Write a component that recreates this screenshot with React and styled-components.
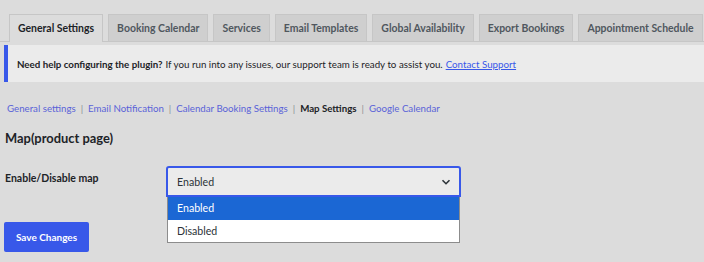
import styled, { createGlobalStyle } from 'styled-components';

const GlobalStyle = createGlobalStyle`
  body {
    margin: 0;
    background: #dcdcdc;
    font-family: Lato, "Open Sans", sans-serif;
    color: #1d2327;
  }
`;

const Page = styled.div`
  width: 704px;
  height: 262px;
  overflow: hidden;
  padding-top: 14px;
  box-sizing: border-box;
`;

const TabBar = styled.div`
  display: flex;
  gap: 5px;
  padding-left: 9px;
  border-bottom: 1px solid #c6c6c6;
`;

const Tab = styled.div`
  padding: 5px 8px;
  font-size: 10.45px;
  line-height: 16px;
  font-weight: 700;
  border: 1px solid #c6c6c6;
  border-bottom: none;
  margin-bottom: ${(p) => (p.active ? '-1px' : '0')};
  background: ${(p) => (p.active ? '#dcdcdc' : '#cfcfcf')};
  color: ${(p) => (p.active ? '#1d2327' : '#50575e')};
  white-space: nowrap;
`;

const Notice = styled.div`
  margin: 3px 0 0 4px;
  height: 37px;
  display: flex;
  align-items: center;
  background: #ebebeb;
  border-left: 4px solid #3858e9;
  padding-left: 9px;
  font-size: 9.75px;
  color: #1d2327;
`;

const Strong = styled.strong`
  font-weight: 700;
  margin-right: 3px;
`;

const Link = styled.a`
  color: #3858e9;
  text-decoration: underline;
  margin-left: 3px;
`;

const SubNav = styled.div`
  display: flex;
  align-items: center;
  padding: 18px 0 0 7px;
  font-size: 9.7px;
  line-height: 16px;
`;

const SubLink = styled.span`
  color: ${(p) => (p.current ? '#1d2327' : '#5a63d8')};
  font-weight: ${(p) => (p.current ? 700 : 400)};
`;

const Sep = styled.span`
  color: #8c8f94;
  padding: 0 5px;
`;

const Heading = styled.h2`
  margin: 12px 0 0 5px;
  font-size: 12.9px;
  line-height: 20px;
  font-weight: 700;
  color: #1d2327;
`;

const FieldRow = styled.div`
  display: flex;
  align-items: flex-start;
  margin-top: 18px;
  padding-left: 5px;
`;

const Label = styled.div`
  width: 161px;
  font-size: 10.5px;
  font-weight: 700;
  line-height: 16px;
  padding-top: 4px;
`;

const SelectWrap = styled.div`
  position: relative;
  width: 295px;
`;

const SelectBox = styled.div`
  height: 31px;
  box-sizing: border-box;
  border: 2px solid #3858e9;
  border-radius: 3px 3px 0 0;
  background: #ebebeb;
  display: flex;
  align-items: center;
  justify-content: space-between;
  padding: 0 8px 0 9px;
  font-size: 10.6px;
  color: #2c3338;
`;

const Options = styled.div`
  position: absolute;
  top: 31px;
  left: 1px;
  right: 1px;
  border: 1px solid #8c8c8c;
  border-top: none;
  background: #ffffff;
`;

const Option = styled.div`
  height: 22.5px;
  display: flex;
  align-items: center;
  padding-left: 9px;
  font-size: 10.6px;
  background: ${(p) => (p.selected ? '#1b67d4' : '#ffffff')};
  color: ${(p) => (p.selected ? '#ffffff' : '#2c3338')};
`;

const SaveButton = styled.button`
  margin: 25px 0 0 4px;
  width: 85px;
  height: 30px;
  border: none;
  border-radius: 2px;
  background: #3858e9;
  color: #ffffff;
  font-family: inherit;
  font-size: 10px;
  font-weight: 700;
  padding: 0;
`;

const Chevron = () => (
  <svg width="10" height="10" viewBox="0 0 10 10">
    <path d="M1.5 3.2 L5 6.7 L8.5 3.2" stroke="#2c3338" strokeWidth="1.6" fill="none" />
  </svg>
);

const tabs = [
  'General Settings',
  'Booking Calendar',
  'Services',
  'Email Templates',
  'Global Availability',
  'Export Bookings',
  'Appointment Schedule',
];

const subLinks = [
  'General settings',
  'Email Notification',
  'Calendar Booking Settings',
  'Map Settings',
  'Google Calendar',
];

function App() {
  return (
    <Page>
      <GlobalStyle />
      <TabBar>
        {tabs.map((t, i) => (
          <Tab key={t} active={i === 0}>{t}</Tab>
        ))}
      </TabBar>

      <Notice>
        <Strong>Need help configuring the plugin?</Strong>
        If you run into any issues, our support team is ready to assist you.
        <Link>Contact Support</Link>
      </Notice>

      <SubNav>
        {subLinks.map((l, i) => (
          <span key={l}>
            <SubLink current={l === 'Map Settings'}>{l}</SubLink>
            {i < subLinks.length - 1 && <Sep>|</Sep>}
          </span>
        ))}
      </SubNav>

      <Heading>Map(product page)</Heading>

      <FieldRow>
        <Label>Enable/Disable map</Label>
        <SelectWrap>
          <SelectBox>
            Enabled
            <Chevron />
          </SelectBox>
          <Options>
            <Option selected>Enabled</Option>
            <Option>Disabled</Option>
          </Options>
        </SelectWrap>
      </FieldRow>

      <SaveButton>Save Changes</SaveButton>
    </Page>
  );
}

export default App;
